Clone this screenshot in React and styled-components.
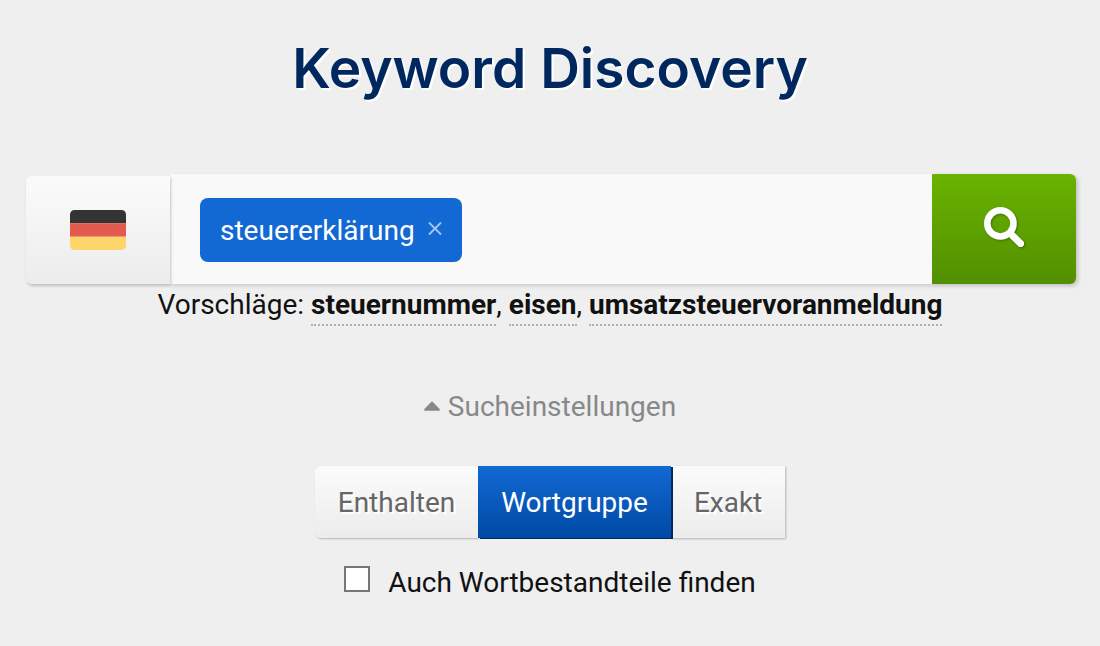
import React, { useState } from "react";
import styled, { createGlobalStyle } from "styled-components";

const suggestions = ["steuernummer", "eisen", "umsatzsteuervoranmeldung"];
const matchTypes = ["Enthalten", "Wortgruppe", "Exakt"];

export default function App() {
  const [tags, setTags] = useState(["steuererklärung"]);
  const [matchType, setMatchType] = useState("Wortgruppe");
  const [settingsOpen, setSettingsOpen] = useState(true);

  const removeTag = (name) => setTags(tags.filter((tag) => tag !== name));

  return (
    <Page>
      <GlobalStyle />
      <Title>Keyword Discovery</Title>
      <SearchForm onSubmit={(e) => e.preventDefault()}>
        <CountryButton type="button" aria-label="Deutschland">
          <GermanFlag />
        </CountryButton>
        <TagField>
          {tags.map((tag) => (
            <Tag key={tag}>
              {tag}
              <RemoveButton type="button" aria-label="Entfernen" onClick={() => removeTag(tag)}>
                <CloseIcon />
              </RemoveButton>
            </Tag>
          ))}
          <TagInput type="text" aria-label="Keyword" />
        </TagField>
        <SubmitButton type="submit" aria-label="Suchen">
          <SearchIcon />
        </SubmitButton>
      </SearchForm>
      <Suggestions>
        Vorschläge:{" "}
        {suggestions.map((item, index) => (
          <React.Fragment key={item}>
            {index > 0 && ", "}
            <SuggestionLink href={`#${item}`}>{item}</SuggestionLink>
          </React.Fragment>
        ))}
      </Suggestions>
      <SettingsToggle
        type="button"
        aria-expanded={settingsOpen}
        onClick={() => setSettingsOpen(!settingsOpen)}
      >
        <Caret viewBox="0 0 16 12" aria-hidden="true">
          <path d="M7.4 0.8 Q8 0.3 8.6 0.8 L15.6 8 Q16.4 9.8 15 9.8 H1 Q-0.4 9.8 0.4 8 Z" fill="currentColor" />
        </Caret>
        Sucheinstellungen
      </SettingsToggle>
      {settingsOpen && (
        <>
          <ButtonGroup role="group" aria-label="Sucheinstellungen">
            {matchTypes.map((type) => (
              <GroupButton
                key={type}
                type="button"
                $active={type === matchType}
                aria-pressed={type === matchType}
                onClick={() => setMatchType(type)}
              >
                {type}
              </GroupButton>
            ))}
          </ButtonGroup>
          <CheckboxLabel htmlFor="parts">
            <Checkbox type="checkbox" id="parts" />
            Auch Wortbestandteile finden
          </CheckboxLabel>
        </>
      )}
    </Page>
  );
}

function GermanFlag() {
  return (
    <Flag viewBox="0 0 56 40" aria-hidden="true">
      <path d="M0 13.3 V5 Q0 0 5 0 H51 Q56 0 56 5 V13.3 Z" fill="#333333" />
      <path d="M0 13.3 H56 V26.7 H0 Z" fill="#e35a4f" />
      <path d="M0 26.7 H56 V35 Q56 40 51 40 H5 Q0 40 0 35 Z" fill="#fdd56a" />
    </Flag>
  );
}

function CloseIcon() {
  return (
    <svg width="14" height="14" viewBox="0 0 14 14" aria-hidden="true">
      <path d="M1 0.5 L13 12.5 M13 0.5 L1 12.5" stroke="#a6c7f0" strokeWidth="1.8" />
    </svg>
  );
}

function SearchIcon() {
  return (
    <Magnifier viewBox="0 0 40 40" aria-hidden="true">
      <circle cx="16.4" cy="16.4" r="13.1" fill="none" stroke="#fff" strokeWidth="6.6" />
      <path d="M25 25 L29 29" stroke="#fff" strokeWidth="4.6" />
      <rect x="24.6" y="29.4" width="17" height="7" rx="2" fill="#fff" transform="rotate(45 32.9 32.9)" />
    </Magnifier>
  );
}

const GlobalStyle = createGlobalStyle`
  * {
    box-sizing: border-box;
  }

  body {
    margin: 0;
    background-color: #efefef;
    color: #111;
    font-family: Roboto, "Liberation Sans", sans-serif;
    font-size: 28px;
    line-height: 42px;
  }

  button, input {
    font: inherit;
  }

  button {
    border: none;
    padding: 0;
    cursor: pointer;
  }
`;

const Page = styled.main`
  display: flex;
  flex-direction: column;
  align-items: center;
  padding: 30px 24px 42px;
`;

const Title = styled.h1`
  margin: 0 0 68px;
  color: #00285e;
  font-family: Inter, sans-serif;
  font-size: 55px;
  font-weight: 600;
  line-height: 76px;
  text-shadow: 2px 2px 0 #fff;
`;

const SearchForm = styled.form`
  display: flex;
  align-items: flex-end;
  width: 100%;
  padding-left: 2px;
`;

const CountryButton = styled.button`
  display: flex;
  align-items: center;
  justify-content: center;
  width: 144px;
  height: 108px;
  z-index: 1;
  border-radius: 6px 0 0 6px;
  background: linear-gradient(#fbfbfb, #ececec);
  box-shadow: 1px 2px 3px rgba(0, 0, 0, 0.2);
`;

const Flag = styled.svg`
  width: 56px;
  height: 40px;
`;

const TagField = styled.div`
  display: flex;
  flex: 1;
  align-items: center;
  min-width: 0;
  height: 110px;
  padding: 2px 30px 0;
  background-color: #f9f9f9;
  box-shadow: 2px 2px 4px rgba(0, 0, 0, 0.15);
`;

const Tag = styled.span`
  display: flex;
  align-items: center;
  gap: 13px;
  height: 64px;
  padding: 2px 20px 0;
  border-radius: 8px;
  background-color: #1269d3;
  color: #fff;
`;

const RemoveButton = styled.button`
  display: flex;
  padding-bottom: 4px;
  background: none;
`;

const TagInput = styled.input`
  flex: 1;
  min-width: 0;
  border: none;
  background: none;

  &:focus {
    outline: none;
  }
`;

const SubmitButton = styled.button`
  display: flex;
  align-items: center;
  justify-content: center;
  width: 144px;
  height: 110px;
  padding-bottom: 4px;
  border-radius: 0 6px 6px 0;
  background: linear-gradient(#69b300, #528f00);
  box-shadow: 2px 2px 4px rgba(0, 0, 0, 0.2);
`;

const Magnifier = styled.svg`
  width: 40px;
  height: 40px;
  filter: drop-shadow(1px 1px 1px rgba(0, 0, 0, 0.3));
`;

const Suggestions = styled.p`
  margin: 0 0 60px;
  text-align: center;
`;

const SuggestionLink = styled.a`
  padding-bottom: 3px;
  border-bottom: 2px dotted #b0b0b0;
  color: #111;
  font-weight: 700;
  text-decoration: none;

  &:hover {
    color: #1269d3;
  }
`;

const SettingsToggle = styled.button`
  display: flex;
  align-items: center;
  gap: 8px;
  margin-bottom: 38px;
  background: none;
  color: #888;
`;

const Caret = styled.svg`
  width: 16px;
  height: 12px;
`;

const ButtonGroup = styled.div`
  display: flex;
  margin-bottom: 24px;
`;

const GroupButton = styled.button`
  height: 72px;
  padding: 2px 23px 0;
  background: ${(props) =>
    props.$active ? "linear-gradient(#1269d3, #0049a5)" : "linear-gradient(#fbfbfb, #ececec)"};
  box-shadow: ${(props) =>
    props.$active ? "2px 1px 0 #00285e" : "1px 1px 2px rgba(0, 0, 0, 0.25)"};
  color: ${(props) => (props.$active ? "#fff" : "#666")};
  text-shadow: ${(props) => (props.$active ? "none" : "2px 2px 0 #fff")};
  z-index: ${(props) => (props.$active ? 1 : 0)};

  &:first-child {
    border-radius: 6px 0 0 6px;
  }
`;

const CheckboxLabel = styled.label`
  display: flex;
  align-items: flex-start;
  gap: 18px;
`;

const Checkbox = styled.input`
  appearance: none;
  width: 26px;
  height: 26px;
  margin: 4px 0 0;
  border: 2px solid #767676;
  background-color: #fff;

  &:checked {
    background-color: #1269d3;
  }
`;
